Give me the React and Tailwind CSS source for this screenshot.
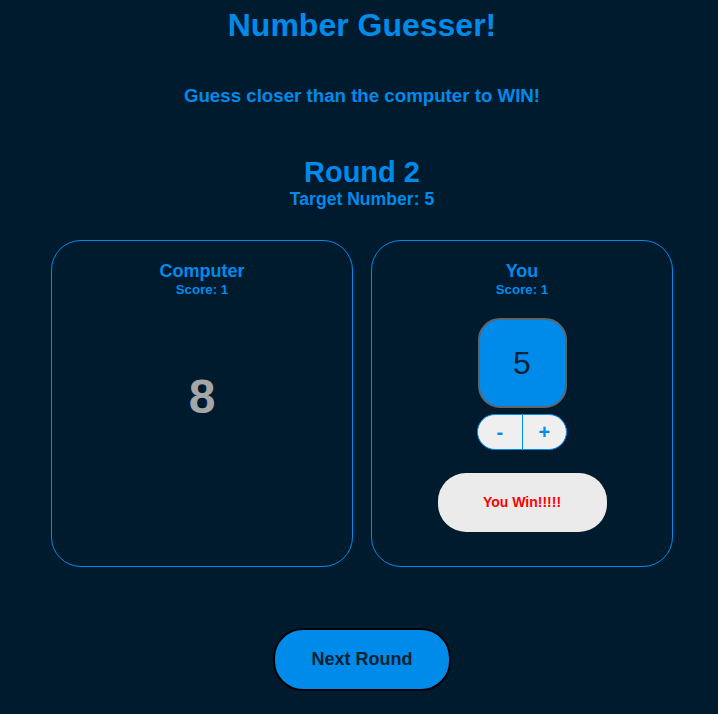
import { useState } from 'react'

const App = () => {
  const [guess, setGuess] = useState(5)
  const computer = 8

  return (
    <div className="min-h-screen w-full bg-[#001b2e] pl-[6px] font-['Liberation_Sans',Arial,sans-serif] text-[#008bea]">
      <div className="flex flex-col items-center pt-[7px]">
        <h1 className="text-[32px] leading-[37px] font-bold">Number Guesser!</h1>
        <p className="mt-[41px] text-[18.7px] leading-[22px] font-bold">Guess closer than the computer to WIN!</p>
        <h2 className="mt-[49px] text-[29px] leading-[33px] font-bold">Round 2</h2>
        <h3 className="text-[17.6px] leading-[21px] font-bold">Target Number: 5</h3>

        <div className="mt-[30px] flex gap-[18px]">
          {/* computer card */}
          <div className="flex h-[327px] w-[302px] flex-col items-center rounded-[30px] border border-[#008bea] pt-[20px]">
            <div className="text-[18px] leading-[21px] font-bold">Computer</div>
            <div className="text-[13.3px] leading-[16px] font-bold">Score: 1</div>
            <div className="mt-[71px] text-[48px] leading-[55px] font-bold text-[#a6a6a6]">{computer}</div>
          </div>

          {/* player card */}
          <div className="flex h-[327px] w-[302px] flex-col items-center rounded-[30px] border border-[#008bea] pt-[20px]">
            <div className="text-[18px] leading-[21px] font-bold">You</div>
            <div className="text-[13.3px] leading-[16px] font-bold">Score: 1</div>
            <div className="mt-[20px] flex h-[90px] w-[89px] items-center justify-center rounded-[22px] border-2 border-[#5f6468] bg-[#008bea] text-[32px] text-[#0b2236]">
              {guess}
            </div>
            <div className="mt-[6px] flex h-[36px] w-[90px] overflow-hidden rounded-full border border-[#008bea] bg-[#efefef]">
              <button
                onClick={() => setGuess(g => g - 1)}
                className="flex flex-1 items-center justify-center border-r border-[#008bea] text-[20px] font-bold text-[#008bea]"
              >
                -
              </button>
              <button
                onClick={() => setGuess(g => g + 1)}
                className="flex flex-1 items-center justify-center text-[20px] font-bold text-[#008bea]"
              >
                +
              </button>
            </div>
            <button className="mt-[23px] h-[59px] w-[169px] rounded-[28px] bg-[#ebebeb] text-[14px] font-bold text-[#ff0000]">
              You Win!!!!!
            </button>
          </div>
        </div>

        <button className="mt-[61px] h-[63px] w-[178px] rounded-[30px] border-2 border-black bg-[#008bea] text-[18px] font-bold text-[#0b2236]">
          Next Round
        </button>
      </div>
    </div>
  )
}

export default App
